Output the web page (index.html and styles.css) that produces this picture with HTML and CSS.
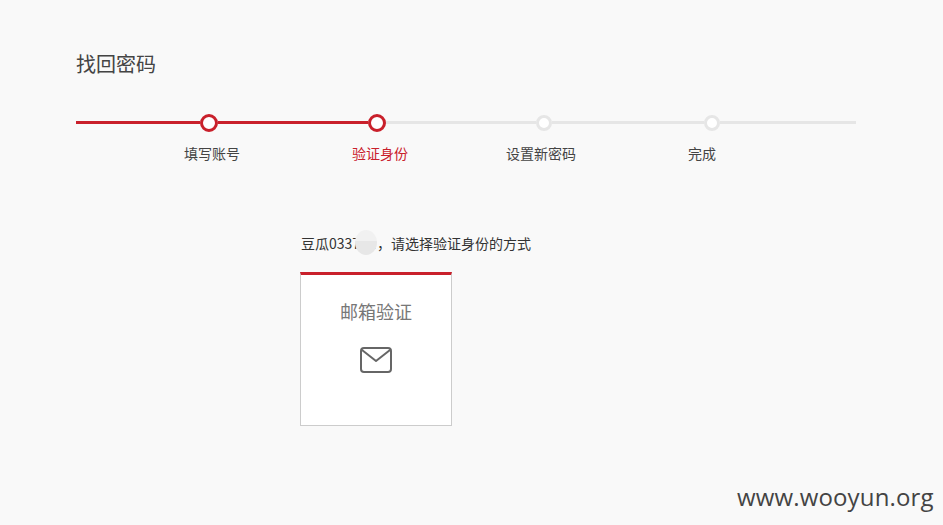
FILE: index.html
```html
<!DOCTYPE html>
<html lang="zh-CN">
<head>
    <meta charset="UTF-8">
    <title>找回密码</title>
    <link rel="stylesheet" href="styles.css">
</head>
<body>
    <div class="container">
        <h1>找回密码</h1>

        <div class="progress">
            <span class="line done first"></span>
            <span class="dot done"></span>
            <span class="line done middle"></span>
            <span class="dot done"></span>
            <span class="line middle"></span>
            <span class="dot"></span>
            <span class="line middle wide"></span>
            <span class="dot"></span>
            <span class="line last"></span>
        </div>
        <div class="step-labels">
            <span>填写账号</span>
            <span class="current">验证身份</span>
            <span>设置新密码</span>
            <span>完成</span>
        </div>

        <div class="verify">
            <p class="verify-tip">豆瓜0337<span class="masked">xx</span>，请选择验证身份的方式<i class="blob"></i></p>
            <div class="card">
                <h2>邮箱验证</h2>
                <svg class="mail-icon" width="32" height="26" viewBox="0 0 32 26" fill="none" stroke="#666" stroke-width="2" stroke-linecap="round" stroke-linejoin="round">
                    <rect x="1" y="1" width="30" height="24" rx="3"></rect>
                    <path d="M2 3l14 11L30 3"></path>
                </svg>
            </div>
        </div>
    </div>
    <div class="watermark">www.wooyun.org</div>
</body>
</html>
```

FILE: styles.css
```css
html, body {
    height: 100%;
}
body {
    margin: 0;
    background-color: #f9f9f9;
    color: #333;
    font-family: "Noto Sans CJK SC", "Liberation Sans", sans-serif;
    overflow: hidden;
    position: relative;
}
.container {
    width: 780px;
    padding: 51px 0 0 76px;
}
h1 {
    margin: 0;
    font-size: 20px;
    line-height: 26px;
    font-weight: 400;
    color: #444;
}
.progress {
    display: flex;
    align-items: center;
    height: 18px;
    margin-top: 37px;
}
.line {
    height: 3px;
    margin-bottom: 1px;
    background-color: #e6e6e6;
}
.line.done {
    background-color: #c9202b;
}
.line.first {
    width: 124px;
}
.line.middle {
    width: 150px;
}
.line.wide {
    width: 152px;
}
.line.last {
    flex: 1;
}
.dot {
    box-sizing: border-box;
    width: 16px;
    height: 16px;
    border: 3px solid #e6e6e6;
    border-radius: 50%;
    background-color: #fff;
}
.dot.done {
    width: 18px;
    height: 18px;
    border-color: #c9202b;
}
.step-labels {
    display: flex;
    margin: 11px 0 0 108px;
    font-size: 14px;
    line-height: 20px;
    color: #444;
}
.step-labels span {
    margin-right: 112px;
}
.step-labels .current {
    margin-right: 98px;
    color: #c9202b;
}
.verify {
    margin: 70px 0 0 224px;
}
.verify-tip {
    position: relative;
    width: 300px;
    margin: 0 0 19px 1px;
    font-size: 14px;
    line-height: 20px;
    color: #333;
}
.masked {
    letter-spacing: 1.5px;
}
.blob {
    position: absolute;
    left: 54px;
    top: -3px;
    width: 22px;
    height: 25px;
    border-radius: 50%;
    background: linear-gradient(#f1f1f1 45%, #e7e7e7 45%);
}
.card {
    box-sizing: border-box;
    width: 152px;
    height: 154px;
    padding-top: 24px;
    background-color: #fff;
    border: 1px solid #ccc;
    border-top: 3px solid #c9202b;
    text-align: center;
}
.card h2 {
    margin: 0;
    font-size: 18px;
    line-height: 24px;
    font-weight: 400;
    color: #777;
}
.mail-icon {
    display: block;
    margin: 24px auto 0;
}
.watermark {
    position: absolute;
    left: 737px;
    top: 480px;
    font-family: "Open Sans", sans-serif;
    font-size: 24px;
    line-height: 33px;
    letter-spacing: 0.15px;
    color: #444;
    white-space: nowrap;
}
```
